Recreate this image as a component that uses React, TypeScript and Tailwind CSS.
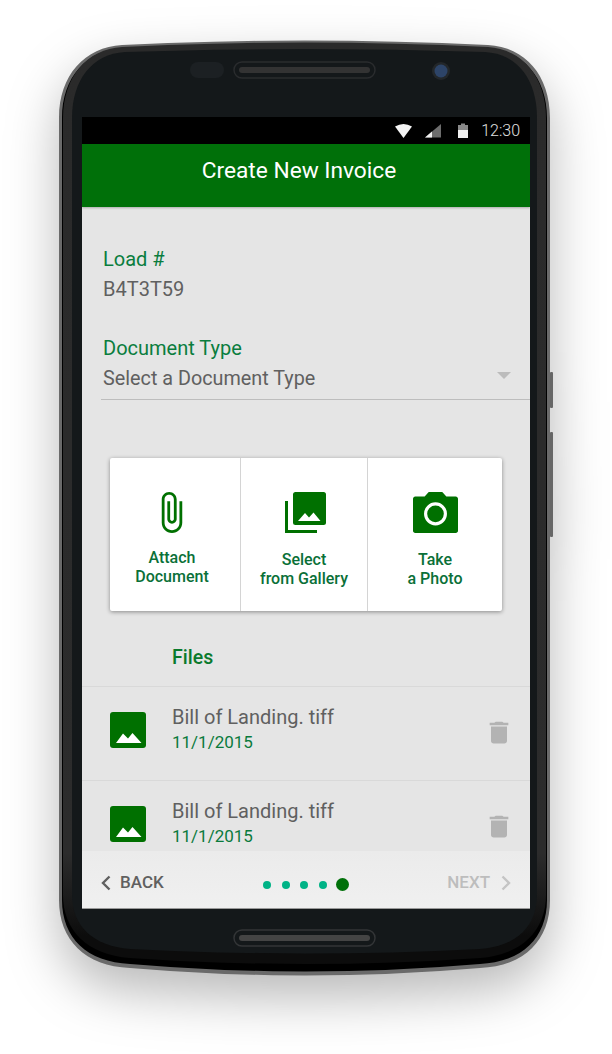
const shell =
  'M122 45 Q305 36 488 45 C525 47 550 75 550 118 L550 900 C550 940 525 966 480 968 Q305 983 130 968 C85 966 59 940 59 900 L59 118 C59 75 85 47 122 45 Z'

function PhoneShell() {
  return (
    <svg viewBox="0 0 612 1054" className="absolute left-[-59px] top-[-40px] h-[1054px] w-[612px] drop-shadow-[0_22px_26px_rgba(0,0,0,0.28)]">
      <defs>
        <linearGradient id="band" x1="0" y1="0" x2="0" y2="1">
          <stop offset="0" stopColor="#2a2a2a" />
          <stop offset="0.88" stopColor="#2c2c2c" />
          <stop offset="0.97" stopColor="#0c0c0c" />
        </linearGradient>
      </defs>
      <path d={shell} fill="#6a6a6a" />
      <path d="M122 48 Q305 39 488 48 C522 50 547 77 547 118 L547 900 C547 938 522 962 480 964 Q305 979 130 964 C87 962 62 938 62 900 L62 118 C62 77 87 50 122 48 Z" fill="#000" />
      <path d="M122 47 Q305 38 488 47 C522 49 546 77 546 118 L546 895 C546 930 522 955 480 958 Q305 970 130 958 C87 955 63 930 63 895 L63 118 C63 77 87 49 122 47 Z" fill="url(#band)" />
      <path d="M125 52 Q305 46 485 52 C518 54 537 80 537 118 L537 895 C537 925 518 946 480 949 Q305 958 130 949 C92 946 72 925 72 895 L72 118 C72 80 92 54 125 52 Z" fill="#14181a" />
      <rect x="190" y="62" width="34" height="16" rx="8" fill="#1c2023" />
      <rect x="234" y="62" width="141" height="16" rx="8" fill="#14181a" stroke="#2a2c2e" strokeWidth="1.5" />
      <rect x="239" y="67" width="131" height="6" rx="3" fill="#333" />
      <circle cx="441" cy="71" r="9" fill="#23272a" />
      <circle cx="441" cy="71" r="6.5" fill="#2d4468" />
      <rect x="234" y="930" width="141" height="16" rx="8" fill="#14181a" stroke="#333537" strokeWidth="1.5" />
      <rect x="239" y="935" width="131" height="6" rx="3" fill="#444" />
      <rect x="550" y="372" width="3" height="36" rx="1" fill="#666" />
      <rect x="550" y="432" width="3" height="105" rx="1" fill="#666" />
    </svg>
  )
}

function StatusIcons() {
  return (
    <svg viewBox="0 0 78 16" className="h-4 w-[78px]">
      <path d="M0 3.5 Q8.5 -1.5 17 3.5 L8.5 15 Z" fill="#f4f4f4" />
      <path d="M46 14.5 L30 14.5 L46 1 Z" fill="#6d6d6d" />
      <path d="M37 14.5 L30 14.5 L37 8.5 Z" fill="#f0f0f0" />
      <path d="M66 0.5 H70 V2 H73 V15 H63 V2 H66 Z" fill="#8a8a8a" />
      <rect x="63" y="7" width="10" height="8" fill="#f0f0f0" />
    </svg>
  )
}

function PaperclipIcon() {
  return (
    <svg viewBox="7 1 11 22" className="h-[41px] w-[22px]" fill="#007000">
      <path d="M16.5 6v11.5c0 2.21-1.79 4-4 4s-4-1.79-4-4V5c0-1.38 1.12-2.5 2.5-2.5s2.5 1.12 2.5 2.5v10.5c0 .55-.45 1-1 1s-1-.45-1-1V6H10v9.5c0 1.38 1.12 2.5 2.5 2.5s2.5-1.12 2.5-2.5V5c0-2.21-1.79-4-4-4S7 2.79 7 5v12.5c0 3.04 2.46 5.5 5.5 5.5s5.5-2.46 5.5-5.5V6h-1.5z" />
    </svg>
  )
}

function GalleryIcon() {
  return (
    <svg viewBox="0 0 41 41" className="ml-[2px] h-[41px] w-[41px]">
      <rect x="8" y="0" width="33" height="33" rx="2.5" fill="#007000" />
      <path d="M0 9 H3 V38 H32 V41 H0 Z" fill="#007000" />
      <path d="M13 29 L20 21 L24 25.5 L28.5 20.5 L35.5 29 Z" fill="#fff" />
    </svg>
  )
}

function CameraIcon() {
  return (
    <svg viewBox="2 2 20 18" preserveAspectRatio="none" className="h-[41px] w-[45px]">
      <path d="M9 2L7.17 4H3c-.55 0-1 .45-1 1v14c0 .55.45 1 1 1h18c.55 0 1-.45 1-1V5c0-.55-.45-1-1-1h-4.17L15 2H9z" fill="#007000" />
      <circle cx="12" cy="11.6" r="4.4" fill="none" stroke="#fff" strokeWidth="1.4" />
    </svg>
  )
}

function ImageIcon() {
  return (
    <svg viewBox="0 0 36 36" className="h-9 w-9 shrink-0">
      <rect width="36" height="36" rx="3" fill="#007000" />
      <path d="M6 31 L13 21.5 L18 26.5 L22.5 21 L31.5 31 Z" fill="#fff" />
    </svg>
  )
}

function TrashIcon() {
  return (
    <svg viewBox="0 0 24 24" preserveAspectRatio="none" className="h-[29px] w-8" fill="#b3b3b3">
      <path d="M6 19c0 1.1.9 2 2 2h8c1.1 0 2-.9 2-2V7H6v12zM19 4h-3.5l-1-1h-5l-1 1H5v2h14V4z" />
    </svg>
  )
}

function Chevron({ left, color }: { left?: boolean; color: string }) {
  return (
    <svg viewBox="0 0 10 16" className="h-4 w-[10px]" fill="none" stroke={color} strokeWidth="2.4">
      <path d={left ? 'M8.5 1.5 L2 8 L8.5 14.5' : 'M1.5 1.5 L8 8 L1.5 14.5'} />
    </svg>
  )
}

function FileRow() {
  return (
    <div className="flex h-[94px] shrink-0 items-start border-t border-[#d9d9d9] pl-[28px] pr-[15px]">
      <div className="mt-[25px]">
        <ImageIcon />
      </div>
      <div className="ml-[26px] mt-[18px] flex-1">
        <p className="text-[20px] leading-[24px] text-[#606060]">Bill of Landing. tiff</p>
        <p className="mt-[1px] text-[17px] leading-[24px] text-[#0a7a3c]">11/1/2015</p>
      </div>
      <div className="mt-[31px]">
        <TrashIcon />
      </div>
    </div>
  )
}

export default function App() {
  return (
    <div className="h-[1054px] w-[612px] overflow-hidden bg-white pl-[59px] pt-[40px] font-[Roboto,sans-serif]">
      <div className="relative h-[936px] w-[492px] pl-[23px] pt-[77px]">
        <PhoneShell />

        <div className="relative flex h-[792px] w-[448px] flex-col overflow-hidden bg-[#e5e5e5]">
          {/* Status bar */}
          <div className="flex h-[27px] shrink-0 items-center justify-end bg-black pr-[10px]">
            <StatusIcons />
            <span className="ml-[8px] text-[16px] font-light text-[#e0e0e0]">12:30</span>
          </div>

          {/* Header */}
          <div className="flex h-[63px] shrink-0 items-center justify-center bg-[#007009] pb-[8px] pr-[14px] shadow-[0_1px_2px_rgba(0,0,0,0.25)]">
            <h1 className="text-[22.7px] font-normal text-white">Create New Invoice</h1>
          </div>

          <div className="flex min-h-0 flex-1 flex-col">
            {/* Form */}
            <div className="pl-[21px] pt-[40px]">
              <p className="text-[20px] leading-[24px] text-[#0a7d3e]">Load #</p>
              <p className="mt-[6px] text-[20px] leading-[24px] text-[#606060]">B4T3T59</p>
              <p className="mt-[35px] text-[20px] leading-[24px] text-[#0a7d3e]">Document Type</p>
            </div>
            <div className="relative ml-[19px] mt-[6px] h-[34px] border-b border-[#bdbdbd] pl-[2px] pt-[1px]">
              <p className="text-[19.8px] leading-[24px] text-[#606060]">Select a Document Type</p>
              <div className="absolute right-[19px] top-[6px] h-0 w-0 border-x-[7px] border-t-[7px] border-x-transparent border-t-[#bcbcbc]" />
            </div>

            {/* Actions card */}
            <div className="ml-[28px] mt-[58px] flex h-[153px] w-[392px] shrink-0 rounded-[2px] bg-white shadow-[0_1px_4px_rgba(0,0,0,0.4)]">
              <div className="flex w-[131px] flex-col items-center border-r border-[#d4d4d4] pr-[6px] pt-[34px]">
                <PaperclipIcon />
                <p className="mt-[15px] text-center text-[16px] font-medium leading-[19px] text-[#0a7038]">Attach<br />Document</p>
              </div>
              <div className="flex w-[127px] flex-col items-center border-r border-[#d4d4d4] pt-[34px]">
                <GalleryIcon />
                <p className="mt-[17px] text-center text-[16px] font-medium leading-[19px] text-[#0a7038]">Select<br />from Gallery</p>
              </div>
              <div className="flex flex-1 flex-col items-center pt-[34px]">
                <CameraIcon />
                <p className="mt-[17px] text-center text-[16px] font-medium leading-[19px] text-[#0a7038]">Take<br />a Photo</p>
              </div>
            </div>

            {/* Files */}
            <h2 className="ml-[90px] mt-[35px] shrink-0 text-[19.5px] font-medium leading-[24px] text-[#0a7a2c]">Files</h2>
            <div className="mt-[16px] flex min-h-0 flex-1 flex-col overflow-hidden">
              <FileRow />
              <FileRow />
            </div>
          </div>

          {/* Footer nav */}
          <div className="relative flex h-[58px] shrink-0 items-center justify-between border-b border-[#9a9a9a] bg-gradient-to-b from-[#ebebeb] to-[#f0f0f0] pl-[19px] pr-[19px] pt-[6px]">
            <div className="flex items-center gap-[9px]">
              <Chevron left color="#606060" />
              <span className="text-[17px] font-medium text-[#606060]">BACK</span>
            </div>
            <div className="absolute left-[181px] top-[27px] flex items-center gap-[10.5px]">
              <span className="h-2 w-2 rounded-full bg-[#00b386]" />
              <span className="h-2 w-2 rounded-full bg-[#00b386]" />
              <span className="h-2 w-2 rounded-full bg-[#00b386]" />
              <span className="h-2 w-2 rounded-full bg-[#00b386]" />
              <span className="-ml-[1.5px] h-[13px] w-[13px] rounded-full bg-[#007009]" />
            </div>
            <div className="flex items-center gap-[11px]">
              <span className="text-[17px] font-medium text-[#bdbdbd]">NEXT</span>
              <Chevron color="#c4c4c4" />
            </div>
          </div>
        </div>
      </div>
    </div>
  )
}
